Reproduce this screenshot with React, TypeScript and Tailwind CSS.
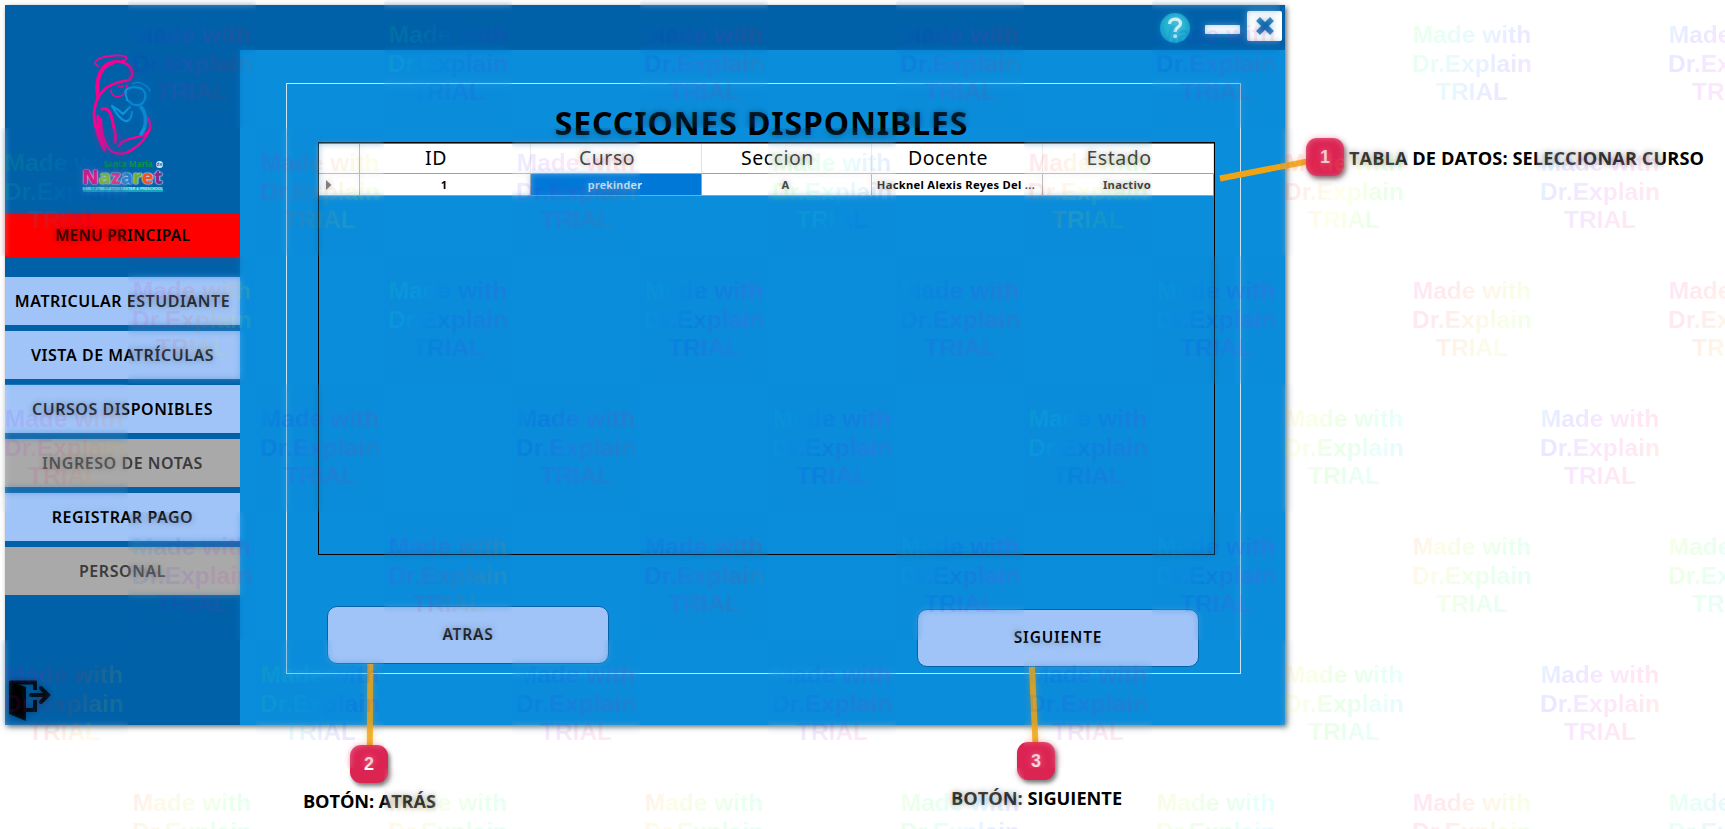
import { Fragment } from "react";

const menu = [
  { label: "MATRICULAR ESTUDIANTE", active: true },
  { label: "VISTA DE MATRÍCULAS", active: true },
  { label: "CURSOS DISPONIBLES", active: true },
  { label: "INGRESO DE NOTAS", active: false },
  { label: "REGISTRAR PAGO", active: true },
  { label: "PERSONAL", active: false },
];

const headers = ["ID", "Curso", "Seccion", "Docente", "Estado"];
const row = ["1", "prekinder", "A", "Hacknel Alexis Reyes Del ...", "Inactivo"];

function Logo() {
  return (
    <div className="flex h-[164px] flex-col items-center pt-[3px]">
      <svg className="h-[104px] w-[62px]" viewBox="92 53 62 104" fill="none" strokeLinecap="round">
        <g stroke="#f4038f">
          <path d="M98 66C90 62 100 56 115 55.500C128 55 130 59 122 61" strokeWidth="1.800" />
          <path d="M97.500 97C95 80 100 66 110 62.500C122 59 133 65 132 75C131.500 78 130 80 127 80.500C117 82 106 86 103 91" strokeWidth="2.600" />
          <path d="M97.500 92C96 76 103 65 112 63" strokeWidth="4" />
          <path d="M104 90C93 100 92 118 97 131C99 141 104 148 105 151C102 140 97 130 98 116" strokeWidth="3" />
          <path d="M111 90C111 95 115 98 121 96C126 95 126 89 127 85M118 86Q121 88 123 86" strokeWidth="1.500" />
          <path d="M102 109C112 106 112 122 115 132Q116 139 115 142" strokeWidth="3" />
          <path d="M101 119C101 130 103 143 111 151C124 160 143 145 150 129Q151 124 148 118M119 146C124 135 145 141 150 128" strokeWidth="2.400" />
        </g>
        <g stroke="#0d92dc" strokeWidth="2.200">
          <path d="M133 84C137 80 148 85 150 91" strokeWidth="1.300" />
          <path d="M125 92C126 88 135 85 142 89C149 95 144 106 136 105C130 105 131 101 127 100C128 97 124 96 126 92" />
          <path d="M112 106Q119 110 123 114L130 107M112 106Q119 119 125 121Q131 122 132 112" />
          <path d="M141 107C147 114 147 126 141 134" strokeWidth="3.500" />
        </g>
      </svg>
      <div className="mt-[2px] flex h-[10px] items-center gap-[3px] pl-[21px] font-['Noto_Sans'] text-[8.300px] leading-[10px] font-bold whitespace-nowrap text-[#0b963f]">
        Santa María
        <span className="flex h-[7px] w-[7px] items-center justify-center rounded-full bg-[#d5edfb] text-[5px] text-[#0b72b8]">de</span>
      </div>
      <div className="h-[17px] font-['Noto_Sans'] text-[19.500px] leading-[15px] font-black [text-shadow:0_0_1px_white,0_0_2px_white]">
        <span className="text-[#e6087f]">N</span><span className="text-[#78b936]">a</span><span className="text-[#e92a85]">z</span><span className="text-[#2481ce]">a</span><span className="text-[#67ae3a]">r</span><span className="text-[#f35322]">e</span><span className="text-[#862b91]">t</span>
      </div>
      <div className="mt-[1px] h-[5px] w-[80px] bg-[#16a4bd] text-center font-['Liberation_Sans'] text-[3.600px] leading-[5px] whitespace-nowrap text-[#b9e4ef]">EARLY STIMULATION CENTER &amp; PRESCHOOL</div>
    </div>
  );
}

function Sidebar() {
  return (
    <aside className="flex w-[235px] flex-col bg-[#0061a9] font-['Noto_Sans',sans-serif] font-semibold">
      <div className="pt-[45px]"><Logo /></div>
      <div className="flex h-[44px] items-center justify-center bg-[#ff0000] text-[15.500px] tracking-[0.250px]">MENU PRINCIPAL</div>
      <nav className="mt-[19px] flex flex-col gap-[6px] text-[16px]">
        {menu.map((m) => (
          <div key={m.label} className={m.active ? "flex h-[48px] items-center justify-center bg-[#a0c4f8] pb-[1px] tracking-[0.550px] whitespace-nowrap text-black" : "flex h-[48px] items-center justify-center bg-[#a9a9a9] pb-[1px] tracking-[0.550px] whitespace-nowrap text-[#3b3b3b]"}>{m.label}</div>
        ))}
      </nav>
      <svg className="mt-auto mb-[3px] ml-[3px] h-[42px] w-[44px]" viewBox="0 0 44 42">
        <path d="M1 1L18 7V41L1 34Z" fill="#000" />
        <path d="M2 2.500H27V10M27 20V30H18" fill="none" stroke="#000" strokeWidth="4" />
        <path d="M23 15H39M33 8L40 15L33 22" fill="none" stroke="#000" strokeWidth="4" strokeLinecap="round" />
      </svg>
    </aside>
  );
}

function TitleBar() {
  return (
    <header className="flex h-[45px] items-start justify-end bg-[#0061a9] pr-[3px]">
      <div className="mt-[8px] flex h-[30px] w-[30px] items-center justify-center rounded-full bg-[#20b2d0]">
        <svg className="h-[22px] w-[16px]" viewBox="0 0 16 22" fill="none" stroke="#fff" strokeWidth="3.200">
          <path d="M2.500 7C2.500 0.500 13.500 0.500 13.500 6.500C13.500 10.500 8 10 8 15" />
          <circle cx="8" cy="19.300" r="2" fill="#fff" stroke="none" />
        </svg>
      </div>
      <div className="mt-[20px] ml-[15px] h-[9px] w-[35px] rounded-[1px] bg-white" />
      <div className="mt-[6px] ml-[7px] flex h-[30px] w-[35px] items-center justify-center rounded-[2px] bg-white">
        <svg className="h-[18px] w-[18px]" viewBox="0 0 18 18" stroke="#0061a9" strokeWidth="5.500"><path d="M2 2L16 16M16 2L2 16" /></svg>
      </div>
    </header>
  );
}

function DataTable() {
  return (
    <div className="h-[413px] w-[897px] border border-black pt-px">
      <div className="grid w-[895px] grid-cols-[41px_171px_171px_170px_171px_171px] bg-white font-['Noto_Sans',sans-serif]">
        <div className="h-[30px] border-r border-b border-[#a0a0a0]" />
        {headers.map((h) => (
          <div key={h} className="flex h-[30px] items-center justify-center border-r border-b border-r-[#e2e2e2] border-b-[#a0a0a0] pr-[18px] pb-[2px] text-[19.500px] tracking-[0.500px]">{h}</div>
        ))}
        <div className="flex h-[22px] items-center border-r border-b border-[#a0a0a0] pl-[7px]">
          <svg className="h-[10px] w-[6px]" viewBox="0 0 6 10"><path d="M0 0L5.500 5L0 10Z" fill="#555" /></svg>
        </div>
        {row.map((c, i) => (
          <div key={c} className={i === 1 ? "flex h-[22px] items-center justify-center border-r border-b border-[#a0a0a0] bg-[#0078d7] pt-[2px] pr-[2px] text-[10.800px] font-semibold tracking-[0.300px] text-white" : "flex h-[22px] items-center justify-center border-r border-b border-[#a0a0a0] pt-[2px] pr-[2px] text-[11.200px] font-bold tracking-[0.300px] whitespace-nowrap text-black"}>{c}</div>
        ))}
      </div>
    </div>
  );
}

const button = "flex h-[58px] w-[282px] items-center justify-center rounded-[10px] border border-[#0461a8] bg-[#a0c4f8] pb-[1px] font-['Noto_Sans',sans-serif] text-[15.500px] font-semibold tracking-[0.800px]";

function Content() {
  return (
    <main className="flex-1 bg-[#0a8ddb] pt-[33px] pl-[46px]">
      <section className="h-[591px] w-[955px] border border-[#cfe2f0] px-[31px] pt-[20px]">
        <h1 className="h-[38px] pr-[4px] text-center font-['Noto_Sans',sans-serif] text-[32px] leading-[38px] font-bold tracking-[0.850px]">SECCIONES DISPONIBLES</h1>
        <DataTable />
        <div className="flex items-start justify-between pt-[51px] pr-[10px] pl-[9px]">
          <div className={button}>ATRAS</div>
          <div className={button + " mt-[3px]"}>SIGUIENTE</div>
        </div>
      </section>
    </main>
  );
}

function Badge({ n, place }: { n: string; place: string }) {
  return <div className={"absolute flex h-[38px] w-[38px] items-center justify-center rounded-[11px] bg-[#dc2453] font-['Liberation_Sans'] text-[18px] font-bold text-white shadow-[2px_3px_4px_#00000088] " + place}>{n}</div>;
}

const caption = "absolute font-['Open_Sans',sans-serif] text-[18.200px] leading-[24px] font-bold whitespace-nowrap ";

function Callouts() {
  return (
    <Fragment>
      <svg className="absolute inset-0" width="1725" height="829" stroke="#f0a413" strokeWidth="6">
        <path d="M1220 178.500L1310 161M370.300 664L369.800 748M1032 667L1035.500 745" />
      </svg>
      <Badge n="1" place="left-[1306px] top-[138px]" />
      <Badge n="2" place="left-[350px] top-[745px]" />
      <Badge n="3" place="left-[1017px] top-[742px]" />
      <div className={caption + "left-[1349px] top-[146px] tracking-[0.080px]"}>TABLA DE DATOS: SELECCIONAR CURSO</div>
      <div className={caption + "left-[303px] top-[789px] tracking-[-0.100px]"}>BOTÓN: ATRÁS</div>
      <div className={caption + "left-[951px] top-[786px]"}>BOTÓN: SIGUIENTE</div>
    </Fragment>
  );
}

// Starting hue of the rainbow in each trial tile, row by row.
const hues = [
  [200, 120, 200, 200, 190, 100, 190],
  [100, 280, 220, 70, 320, 320, 180],
  [270, 130, 150, 170, 150, 290, 290],
  [240, 190, 190, 150, 130, 20, 190],
  [170, 240, 210, 150, 150, 0, 60],
  [260, 100, 180, 170, 180, 20, 190],
  [350, 0, 0, 80, 30, 290, 110],
];

function TrialTile({ hue }: { hue: number }) {
  const stops = [0, 50, 100, 150, 200].map((d) => `hsl(${hue + d} 100% 50%)`).join(",");
  return (
    <div className="relative h-[128px] w-[128px]">
      <div className="absolute inset-0 opacity-35 backdrop-blur-[3px]" />
      <div className="relative bg-clip-text pt-[21px] text-center font-['Liberation_Sans',sans-serif] text-[24.500px] leading-[28.500px] font-bold whitespace-nowrap text-transparent opacity-[0.09]" style={{ backgroundImage: `linear-gradient(115deg, ${stops})` }}>
        <div>Made with</div>
        <div>Dr.Explain</div>
        <div>TRIAL</div>
      </div>
    </div>
  );
}

function TrialOverlay() {
  return (
    <div className="pointer-events-none absolute top-0 left-0 grid w-[1792px] grid-cols-[repeat(14,128px)]">
      {hues.map((line, r) =>
        line.map((h, i) => (
          <Fragment key={r + "-" + i}>
            {r % 2 === 0 && <div />}
            <TrialTile hue={h} />
            {r % 2 === 1 && <div />}
          </Fragment>
        ))
      )}
    </div>
  );
}

export default function App() {
  return (
    <div className="relative h-[829px] w-[1725px] overflow-hidden bg-white p-[5px] text-black">
      <div className="flex h-[720px] w-[1280px] shadow-[2px_2px_5px_#00000090]">
        <Sidebar />
        <div className="flex flex-1 flex-col">
          <TitleBar />
          <Content />
        </div>
      </div>
      <Callouts />
      <TrialOverlay />
    </div>
  );
}
